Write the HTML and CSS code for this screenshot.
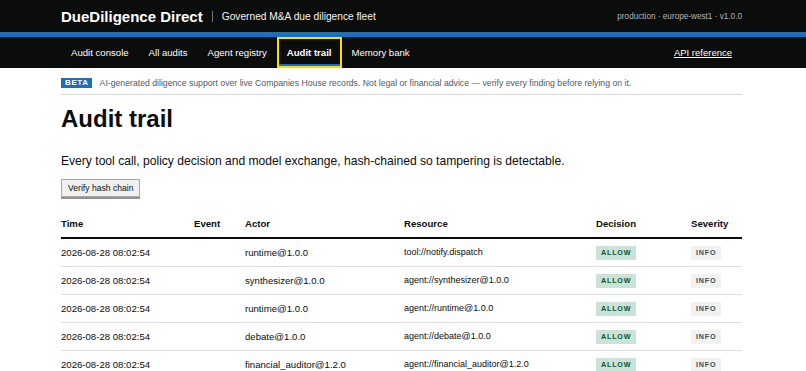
FILE: index.html
```html
<!doctype html>
<html lang="en">
  <head>
    <meta charset="UTF-8" />
    <meta name="viewport" content="width=device-width, initial-scale=1.0" />
    <title>Audit trail – DueDiligence Direct</title>
    <link rel="stylesheet" href="styles.css">
  </head>
  <body>
    <header class="masthead">
      <div class="wrap masthead-row">
        <a class="brand" href="#">DueDiligence Direct</a>
        <span class="divider"></span>
        <span class="tagline">Governed M&amp;A due diligence fleet</span>
        <span class="env">production · europe-west1 · v1.0.0</span>
      </div>
    </header>

    <nav class="nav">
      <div class="wrap nav-row">
        <ul class="nav-list">
          <li><a href="#">Audit console</a></li>
          <li><a href="#">All audits</a></li>
          <li><a href="#">Agent registry</a></li>
          <li><a href="#" class="active" aria-current="page">Audit trail</a></li>
          <li><a href="#">Memory bank</a></li>
        </ul>
        <a href="#" class="api-link">API reference</a>
      </div>
    </nav>

    <main class="wrap">
      <div class="phase">
        <strong class="phase-tag">BETA</strong>
        <span>AI-generated diligence support over live Companies House records. Not legal or financial advice — verify every finding before relying on it.</span>
      </div>

      <h1>Audit trail</h1>
      <p class="lead">Every tool call, policy decision and model exchange, hash-chained so tampering is detectable.</p>

      <div class="actions">
        <button type="button" class="btn">Verify hash chain</button>
      </div>

      <table class="trail">
        <colgroup>
          <col class="c-time" />
          <col class="c-event" />
          <col class="c-actor" />
          <col class="c-resource" />
          <col class="c-decision" />
          <col />
        </colgroup>
        <thead>
          <tr>
            <th>Time</th>
            <th>Event</th>
            <th>Actor</th>
            <th>Resource</th>
            <th>Decision</th>
            <th>Severity</th>
          </tr>
        </thead>
        <tbody>
          <tr>
            <td>2026-08-28 08:02:54</td>
            <td></td>
            <td>runtime@1.0.0</td>
            <td class="res">tool://notify.dispatch</td>
            <td><span class="tag allow">ALLOW</span></td>
            <td><span class="tag info">INFO</span></td>
          </tr>
          <tr>
            <td>2026-08-28 08:02:54</td>
            <td></td>
            <td>synthesizer@1.0.0</td>
            <td class="res">agent://synthesizer@1.0.0</td>
            <td><span class="tag allow">ALLOW</span></td>
            <td><span class="tag info">INFO</span></td>
          </tr>
          <tr>
            <td>2026-08-28 08:02:54</td>
            <td></td>
            <td>runtime@1.0.0</td>
            <td class="res">agent://runtime@1.0.0</td>
            <td><span class="tag allow">ALLOW</span></td>
            <td><span class="tag info">INFO</span></td>
          </tr>
          <tr>
            <td>2026-08-28 08:02:54</td>
            <td></td>
            <td>debate@1.0.0</td>
            <td class="res">agent://debate@1.0.0</td>
            <td><span class="tag allow">ALLOW</span></td>
            <td><span class="tag info">INFO</span></td>
          </tr>
          <tr>
            <td>2026-08-28 08:02:54</td>
            <td></td>
            <td>financial_auditor@1.2.0</td>
            <td class="res">agent://financial_auditor@1.2.0</td>
            <td><span class="tag allow">ALLOW</span></td>
            <td><span class="tag info">INFO</span></td>
          </tr>
        </tbody>
      </table>
    </main>
  </body>
</html>
```

FILE: styles.css
```css
:root {
  --ink: #0b0c0c;
  --blue: #1d70b8;
  --focus: #ffdd00;
  --rule: #b1b4b6;
  --muted: #505a5f;
}

* {
  box-sizing: border-box;
}

body {
  margin: 0;
  font-family: 'Liberation Sans', Arial, Helvetica, sans-serif;
  font-size: 9.6px;
  color: var(--ink);
  background: #fff;
}

a {
  color: inherit;
}

.wrap {
  max-width: 681px;
  margin: 0 64px 0 61px;
}

/* masthead */
.masthead {
  background: var(--ink);
  color: #fff;
  border-bottom: 5px solid var(--blue);
}
.masthead-row {
  height: 32px;
  display: flex;
  align-items: center;
}
.brand {
  font-size: 15px;
  font-weight: 700;
  text-decoration: none;
}
.divider {
  width: 1px;
  height: 11px;
  background: #6f777b;
  margin: 0 9px 0 9px;
}
.tagline {
  font-size: 10.2px;
  color: #f3f2f1;
}
.env {
  margin-left: auto;
  font-size: 8.2px;
  color: #b1b4b6;
}

/* navigation */
.nav {
  background: var(--ink);
  color: #fff;
}
.nav-row {
  display: flex;
  align-items: center;
  justify-content: space-between;
}
.nav-list {
  list-style: none;
  margin: 0;
  padding: 0;
  display: flex;
}
.nav-list a {
  display: flex;
  align-items: center;
  height: 31px;
  padding: 0 10px;
  text-decoration: none;
}
.nav-list a.active {
  font-weight: 700;
  box-shadow:
    inset 0 0 0 2px var(--focus),
    inset 0 -4px 0 var(--blue);
}
.api-link {
  margin-right: 10px;
  font-size: 9.5px;
}

/* phase banner */
.phase {
  display: flex;
  align-items: center;
  gap: 8px;
  padding: 10px 0 6px;
  border-bottom: 1px solid #d8d9da;
  font-size: 8.7px;
  line-height: 10px;
  color: var(--muted);
}
.phase-tag {
  background: var(--blue);
  color: #fff;
  font-size: 8px;
  letter-spacing: 0.6px;
  padding: 0 3px 0 4px;
  line-height: 10px;
}

h1 {
  font-size: 24px;
  line-height: 24px;
  margin: 12px 0 22px;
}

.lead {
  font-size: 12.1px;
  line-height: 16px;
  margin: 0 0 10px;
}

.btn {
  font: inherit;
  font-size: 8.6px;
  height: 18px;
  padding: 0 6px;
  color: var(--ink);
  background: #f0f0f0;
  border: 1px solid #a8a8a8;
  border-radius: 0;
  box-shadow: 0 2px 0 #929191;
  cursor: pointer;
}

/* table */
.trail {
  width: 100%;
  margin-top: 12px;
  border-collapse: separate;
  border-spacing: 0;
  table-layout: fixed;
}
.c-time { width: 133px; }
.c-event { width: 51px; }
.c-actor { width: 159px; }
.c-resource { width: 192px; }
.c-decision { width: 95px; }

.trail th {
  text-align: left;
  font-weight: 700;
  padding: 9px 0 7px;
  line-height: 12px;
  border-bottom: 2px solid var(--ink);
}
.trail td {
  padding: 0;
  line-height: 27px;
  border-bottom: 1px solid #dcdddd;
  white-space: nowrap;
}
.trail td.res {
  font-size: 9px;
}

.tag {
  display: inline-block;
  vertical-align: middle;
  line-height: 14px;
  padding: 0 5px;
  font-size: 7.2px;
  font-weight: 700;
  letter-spacing: 0.8px;
}
.tag.allow {
  background: #cce2d8;
  color: #005a30;
}
.tag.info {
  background: #f0f1f1;
  color: #454a4d;
}
```
